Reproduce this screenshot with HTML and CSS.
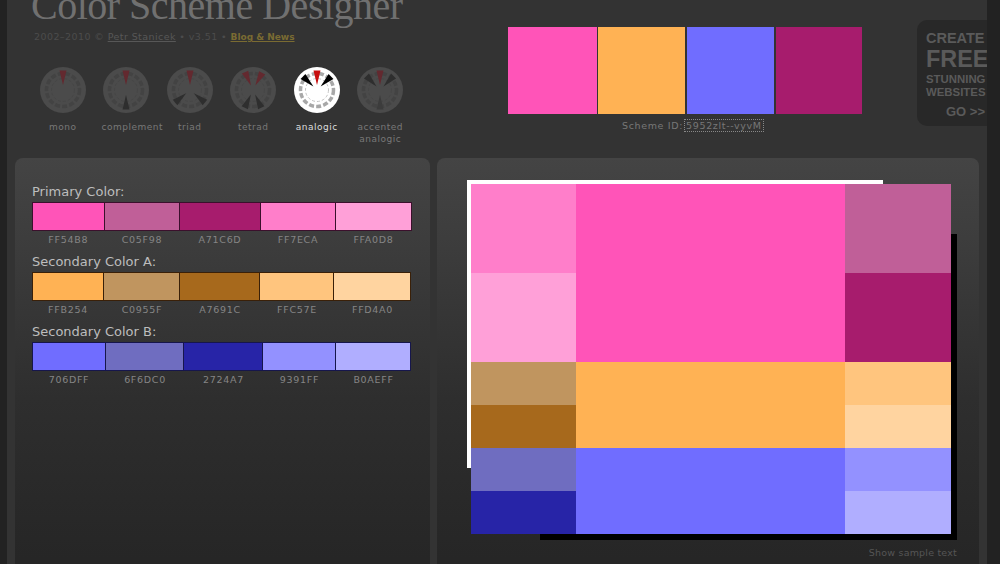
FILE: index.html
```html
<!DOCTYPE html>
<html lang="en">
<head>
<meta charset="utf-8">
<title>Color Scheme Designer</title>
<link rel="stylesheet" href="styles.css">
</head>
<body>
<svg class="defs" aria-hidden="true">
  <symbol id="dial" viewBox="0 0 46 46">
    <circle class="dial-face" cx="23" cy="23" r="23"/>
    <circle class="dial-ring" cx="23" cy="23" r="16.5"/>
    <circle class="dial-inner" cx="23" cy="23" r="11.5"/>
  </symbol>
</svg>
<div class="page">
  <header class="head">
    <div class="brand">
      <h1 class="title">Color Scheme Designer</h1>
      <p class="credit">2002–2010 © <a class="credit-link">Petr Stanicek</a> • v3.51 • <a class="blog">Blog &amp; News</a></p>
      <ul class="modes">
        <li class="mode">
          <svg class="dial" viewBox="0 0 46 46"><use href="#dial"/><path class="w-main" d="M19.5 3.5h7L23 18z"/></svg>
          <span class="mode-name">mono</span>
        </li>
        <li class="mode">
          <svg class="dial" viewBox="0 0 46 46"><use href="#dial"/><path class="w-main" d="M19.5 3.5h7L23 18z"/><path class="w-alt" transform="rotate(180 23 23)" d="M19.5 3.5h7L23 18z"/></svg>
          <span class="mode-name mode-name-wide">complement</span>
        </li>
        <li class="mode">
          <svg class="dial" viewBox="0 0 46 46"><use href="#dial"/><path class="w-main" d="M19.5 3.5h7L23 18z"/><path class="w-alt" transform="rotate(130 23 23)" d="M19.5 3.5h7L23 18z"/><path class="w-alt" transform="rotate(230 23 23)" d="M19.5 3.5h7L23 18z"/></svg>
          <span class="mode-name">triad</span>
        </li>
        <li class="mode">
          <svg class="dial" viewBox="0 0 46 46"><use href="#dial"/><path class="w-main" transform="rotate(-24 23 23)" d="M19.5 3.5h7L23 18z"/><path class="w-main" transform="rotate(28 23 23)" d="M19.5 3.5h7L23 18z"/><path class="w-alt" transform="rotate(155 23 23)" d="M19.5 3.5h7L23 18z"/><path class="w-alt" transform="rotate(205 23 23)" d="M19.5 3.5h7L23 18z"/></svg>
          <span class="mode-name">tetrad</span>
        </li>
        <li class="mode mode-on">
          <svg class="dial" viewBox="0 0 46 46"><use href="#dial"/><path class="w-alt" transform="rotate(-46 23 23)" d="M19.5 3.5h7L23 18z"/><path class="w-alt" transform="rotate(46 23 23)" d="M19.5 3.5h7L23 18z"/><path class="w-main" d="M19.5 3.5h7L23 18z"/></svg>
          <span class="mode-name">analogic</span>
        </li>
        <li class="mode">
          <svg class="dial" viewBox="0 0 46 46"><use href="#dial"/><path class="w-alt" transform="rotate(-44 23 23)" d="M19.5 3.5h7L23 18z"/><path class="w-alt" transform="rotate(44 23 23)" d="M19.5 3.5h7L23 18z"/><path class="w-main" d="M19.5 3.5h7L23 18z"/><path class="w-faint" transform="rotate(180 23 23)" d="M19.5 3.5h7L23 18z"/></svg>
          <span class="mode-name">accented<br>analogic</span>
        </li>
      </ul>
    </div>
    <div class="scheme">
      <div class="scheme-swatches">
        <span class="chip chip-a c-ff54b8"></span>
        <span class="chip chip-b c-ffb254"></span>
        <span class="chip chip-c c-706dff"></span>
        <span class="chip chip-d c-a71c6d"></span>
      </div>
      <p class="scheme-id">Scheme ID:<span class="scheme-code">5952zlt--vyvM</span></p>
    </div>
    <a class="promo">
      <span class="promo-create">CREATE</span>
      <span class="promo-free">FREE</span>
      <span class="promo-small promo-first">STUNNING</span>
      <span class="promo-small">WEBSITES</span>
      <span class="promo-go">GO &gt;&gt;</span>
    </a>
  </header>
  <main class="panels">
    <section class="panel panel-list">
      <h2 class="group-title">Primary Color:</h2>
      <div class="row row-p">
        <div class="cell"><span class="fill c-ff54b8"></span><span class="hex">FF54B8</span></div>
        <div class="cell"><span class="fill c-c05f98"></span><span class="hex">C05F98</span></div>
        <div class="cell"><span class="fill c-a71c6d"></span><span class="hex">A71C6D</span></div>
        <div class="cell"><span class="fill c-ff7eca"></span><span class="hex">FF7ECA</span></div>
        <div class="cell"><span class="fill c-ffa0d8"></span><span class="hex">FFA0D8</span></div>
      </div>
      <h2 class="group-title">Secondary Color A:</h2>
      <div class="row row-a">
        <div class="cell"><span class="fill c-ffb254"></span><span class="hex">FFB254</span></div>
        <div class="cell"><span class="fill c-c0955f"></span><span class="hex">C0955F</span></div>
        <div class="cell"><span class="fill c-a7691c"></span><span class="hex">A7691C</span></div>
        <div class="cell"><span class="fill c-ffc57e"></span><span class="hex">FFC57E</span></div>
        <div class="cell"><span class="fill c-ffd4a0"></span><span class="hex">FFD4A0</span></div>
      </div>
      <h2 class="group-title">Secondary Color B:</h2>
      <div class="row row-b">
        <div class="cell"><span class="fill c-706dff"></span><span class="hex">706DFF</span></div>
        <div class="cell"><span class="fill c-6f6dc0"></span><span class="hex">6F6DC0</span></div>
        <div class="cell"><span class="fill c-2724a7"></span><span class="hex">2724A7</span></div>
        <div class="cell"><span class="fill c-9391ff"></span><span class="hex">9391FF</span></div>
        <div class="cell"><span class="fill c-b0aeff"></span><span class="hex">B0AEFF</span></div>
      </div>
    </section>
    <section class="panel panel-preview">
      <div class="preview">
        <div class="mosaic">
          <span class="m-l1 c-ff7eca"></span>
          <span class="m-l2 c-ffa0d8"></span>
          <span class="m-l3 c-c0955f"></span>
          <span class="m-l4 c-a7691c"></span>
          <span class="m-l5 c-6f6dc0"></span>
          <span class="m-l6 c-2724a7"></span>
          <span class="m-c1 c-ff54b8"></span>
          <span class="m-c2 c-ffb254"></span>
          <span class="m-c3 c-706dff"></span>
          <span class="m-r1 c-c05f98"></span>
          <span class="m-r2 c-a71c6d"></span>
          <span class="m-r3 c-ffc57e"></span>
          <span class="m-r4 c-ffd4a0"></span>
          <span class="m-r5 c-9391ff"></span>
          <span class="m-r6 c-b0aeff"></span>
        </div>
      </div>
      <p class="sample">Show sample text</p>
    </section>
  </main>
</div>
</body>
</html>
```

FILE: styles.css
```css
* { box-sizing: border-box; }
html, body { height: 100%; }
body {
  margin: 0;
  background: #222;
  font-family: "DejaVu Sans", Verdana, sans-serif;
  overflow: hidden;
}
.defs { display: none; }

.page {
  width: 980px;
  height: 564px;
  margin-left: 7px;
  padding: 0 8px;
  background: #333;
  overflow: hidden;
}

.head {
  display: flex;
  height: 158px;
  margin-right: -8px;
}
.brand { width: 493px; padding-left: 16px; flex: none; }
.title {
  margin: -18px 0 0;
  font: 400 40px/48px "Liberation Serif", serif;
  letter-spacing: -.5px;
  color: #707070;
  white-space: nowrap;
}
.credit {
  margin: 1px 0 0 3px;
  font-size: 9.5px;
  line-height: 12px;
  letter-spacing: .42px;
  color: #4c4c4c;
  white-space: nowrap;
}
.credit-link { text-decoration: underline; color: #575757; }
.blog { font-weight: 700; font-size: 9px; letter-spacing: 0; text-decoration: underline; color: #7a6b32; }

.modes {
  display: flex;
  margin: 0;
  padding: 24px 0 0;
  list-style: none;
}
.mode { width: 63.5px; display: flex; flex-direction: column; align-items: center; flex: none; }
.dial { width: 46px; height: 46px; display: block; --face: #4b4b4b; --ring: #434343; --inner: #464646; --main: #63292f; --alt: #2e2e2e; --faint: #3c3c3c; }
.mode-on .dial { --face: #fff; --ring: #a8a8a8; --inner: #c4c4c4; --main: #c80d0d; --alt: #000; }
.dial-face { fill: var(--face); }
.dial-ring { fill: none; stroke: var(--ring); stroke-width: 3.5; stroke-dasharray: 5 2.2; }
.dial-inner { fill: none; stroke: var(--inner); stroke-width: 1; stroke-dasharray: 3 2; }
.w-main { fill: var(--main); }
.w-alt { fill: var(--alt); }
.w-faint { fill: var(--faint); }
.mode-name {
  margin-top: 8px;
  font-size: 9px;
  line-height: 12px;
  letter-spacing: .5px;
  text-align: center;
  color: #787878;
  white-space: nowrap;
}
.mode-name-wide { margin-left: 12px; }
.mode-on .mode-name { color: #ddd; }

.scheme { width: 354px; padding-top: 27px; flex: none; }
.scheme-swatches { display: flex; height: 87px; gap: 1px; }
.chip { display: block; height: 100%; }
.chip-a { width: 89px; }
.chip-b { width: 87px; }
.chip-c { width: 87px; margin-left: 1px; }
.chip-d { width: 86px; margin-left: 1px; }
.scheme-id {
  margin: 6px 0 0 114px;
  font-size: 9.5px;
  line-height: 12px;
  letter-spacing: .65px;
  color: #777;
  white-space: nowrap;
}
.scheme-code { margin-left: 1px; padding: 0 1px; border: 1px dotted #888; }

.promo {
  width: 70px;
  height: 106px;
  margin: 20px 0 0 auto;
  padding: 10px 0 0 9px;
  display: flex;
  flex-direction: column;
  background: #282828;
  border-radius: 10px 0 0 10px;
  font-family: "Liberation Sans", Arial, sans-serif;
  font-weight: 700;
  color: #5a5a5a;
  white-space: nowrap;
}
.promo-create { font-size: 14.5px; line-height: 16px; }
.promo-free { font-size: 23.4px; line-height: 25px; margin-top: 1px; }
.promo-small { font-size: 11.4px; line-height: 13px; }
.promo-first { margin-top: 1px; }
.promo-go { font-size: 13px; line-height: 16px; margin-top: 5px; padding-left: 20px; }

.panels { display: grid; grid-template-columns: 415px 542px; gap: 7px; height: 406px; }
.panel {
  height: 430px;
  border-radius: 8px 8px 0 0;
  background: linear-gradient(#444 0, #3d3d3d 80px, #2e2e2e 240px, #262626 400px);
}

.panel-list { padding: 25px 18px 0 17px; }
.group-title {
  margin: 0;
  font-size: 13px;
  line-height: 17px;
  font-weight: 400;
  color: #bdbdbd;
}
.row { display: grid; height: 45px; margin: 2px 0 6px; }
.row-p { grid-template-columns: 72.5px 75px 81px 75px 76px; --edge: #3b102c; }
.row-a { grid-template-columns: 72px 76px 80px 74px 77px; --edge: #3a2008; }
.row-b { grid-template-columns: 74px 78px 79px 73px 75px; --edge: #16164c; }
.cell { min-width: 0; text-align: center; }
.fill {
  display: block;
  height: 29px;
  border: 1px solid var(--edge);
  border-width: 1px 1px 1px 0;
}
.cell:first-child .fill { border-left-width: 1px; }
.hex {
  display: block;
  margin-top: 3px;
  font-size: 9.5px;
  line-height: 12px;
  letter-spacing: .7px;
  color: #858585;
}

.panel-preview { padding: 26px 22px 0 34px; }
.preview {
  position: relative;
  width: 480px;
  height: 350px;
}
.preview::before {
  content: "";
  position: absolute;
  left: -4px;
  top: -4px;
  width: 416px;
  height: 288px;
  background: #fff;
}
.preview::after {
  content: "";
  position: absolute;
  left: 69px;
  top: 50px;
  width: 417px;
  height: 306px;
  background: #000;
}
.mosaic {
  position: relative;
  z-index: 1;
  display: grid;
  grid-template-columns: 105px 269px 106px;
  grid-template-rows: repeat(2, 89px) repeat(4, 43px);
  height: 350px;
}
.mosaic span { display: block; }
.m-c1 { grid-area: 1 / 2 / 3 / 3; }
.m-c2 { grid-area: 3 / 2 / 5 / 3; }
.m-c3 { grid-area: 5 / 2 / 7 / 3; }
.m-r1 { grid-area: 1 / 3; }
.m-r2 { grid-area: 2 / 3; }
.m-r3 { grid-area: 3 / 3; }
.m-r4 { grid-area: 4 / 3; }
.m-r5 { grid-area: 5 / 3; }
.m-r6 { grid-area: 6 / 3; }
.m-l1 { grid-area: 1 / 1; }
.m-l2 { grid-area: 2 / 1; }
.m-l3 { grid-area: 3 / 1; }
.m-l4 { grid-area: 4 / 1; }
.m-l5 { grid-area: 5 / 1; }
.m-l6 { grid-area: 6 / 1; }
.sample {
  width: 486px;
  margin: 13px 0 0;
  font-size: 9.5px;
  line-height: 12px;
  letter-spacing: .2px;
  text-align: right;
  color: #555;
  white-space: nowrap;
}

.c-ff54b8 { background: #ff54b8; }
.c-c05f98 { background: #c05f98; }
.c-a71c6d { background: #a71c6d; }
.c-ff7eca { background: #ff7eca; }
.c-ffa0d8 { background: #ffa0d8; }
.c-ffb254 { background: #ffb254; }
.c-c0955f { background: #c0955f; }
.c-a7691c { background: #a7691c; }
.c-ffc57e { background: #ffc57e; }
.c-ffd4a0 { background: #ffd4a0; }
.c-706dff { background: #706dff; }
.c-6f6dc0 { background: #6f6dc0; }
.c-2724a7 { background: #2724a7; }
.c-9391ff { background: #9391ff; }
.c-b0aeff { background: #b0aeff; }
```
